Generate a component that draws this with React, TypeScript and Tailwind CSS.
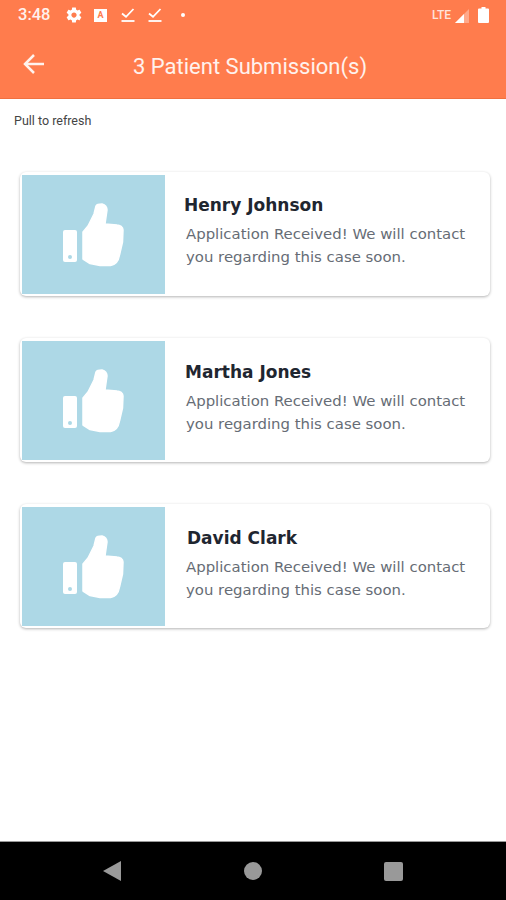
const submissions = [
    { name: 'Henry Johnson', nameClass: 'ml-[19px] mt-[19px]' },
    { name: 'Martha Jones', nameClass: 'ml-[20px] mt-[20px]' },
    { name: 'David Clark', nameClass: 'ml-[22px] mt-[20px]' },
];

function ThumbIcon() {
    return (
        <svg width="64" height="64" viewBox="0 0 64 64" fill="#fff">
            <path d="M1 29a2 2 0 0 1 2-2h10a2 2 0 0 1 2 2v28a2 2 0 0 1-2 2H3a2 2 0 0 1-2-2z" />
            <circle cx="8" cy="54" r="2" fill="#add8e6" />
            <path
                d="M21 56V29l5-6 6-12 2-8c1-2 4-2 6-2 3 1 5 3 5 6l-1 7-1 7 12 1c3 0 6 2 6 5l-.5 12-3 13c-1 6-4 10-9 10.500H38l-10-2z"
                stroke="#fff"
                strokeWidth="1.500"
                strokeLinejoin="round"
            />
        </svg>
    );
}

function GearIcon() {
    return (
        <svg width="18" height="18" viewBox="0 0 24 24" fill="#fff" className="mr-[11px]">
            <path d="M19.430 12.980c.040-.320.070-.640.070-.980s-.030-.660-.070-.980l2.110-1.650c.190-.150.240-.420.120-.640l-2-3.460c-.120-.220-.390-.300-.610-.220l-2.490 1c-.520-.400-1.080-.730-1.690-.980l-.380-2.650C14.460 2.180 14.250 2 14 2h-4c-.250 0-.460.180-.490.420l-.380 2.650c-.610.250-1.170.590-1.690.980l-2.490-1c-.230-.090-.490 0-.610.220l-2 3.460c-.130.220-.070.490.120.640l2.110 1.650c-.040.320-.070.650-.070.980s.030.660.070.980l-2.110 1.650c-.190.150-.240.420-.120.640l2 3.460c.120.220.390.300.610.220l2.490-1c.520.400 1.080.730 1.690.980l.380 2.650c.030.240.240.420.490.420h4c.250 0 .460-.180.490-.420l.380-2.650c.610-.250 1.170-.590 1.690-.980l2.490 1c.230.090.490 0 .610-.220l2-3.460c.120-.220.070-.490-.120-.640zM12 15.500c-1.930 0-3.500-1.570-3.500-3.500s1.570-3.500 3.500-3.500 3.500 1.570 3.500 3.500-1.570 3.500-3.500 3.500z" />
        </svg>
    );
}

function DoneIcon({ className }: { className: string }) {
    return (
        <svg width="14" height="15" viewBox="0 0 14 15" fill="none" stroke="#fff" strokeWidth="1.800" className={className}>
            <path d="M1 5.500l4 3.300L12.500 1" />
            <path d="M0.500 13h13" />
        </svg>
    );
}

function StatusBar() {
    return (
        <div className="h-[30px] flex items-center text-white pl-[18px]">
            <span className="text-[16.500px] font-medium w-[47px] font-['Roboto',sans-serif] opacity-90">3:48</span>
            <GearIcon />
            <div className="w-[13px] h-[13px] bg-white text-[#ff7c4d] text-[9px] leading-[13px] font-bold text-center mr-[14px] font-['Roboto',sans-serif]">A</div>
            <DoneIcon className="mr-[13px] mt-[1px]" />
            <DoneIcon className="mr-[19px] mt-[1px]" />
            <div className="w-[4px] h-[4px] rounded-full bg-white" />
            <span className="ml-auto text-[12px] font-medium opacity-80 font-['Roboto',sans-serif]">LTE</span>
            <svg width="16" height="16" viewBox="0 0 16 16" className="ml-[3px] mt-[1px]">
                <path d="M15 1v14H1z" fill="#fff" opacity="0.35" />
                <path d="M10 6v9H1z" fill="#fff" />
            </svg>
            <svg width="11" height="16" viewBox="0 0 11 16" fill="#fff" className="ml-[8px] mr-[17px]">
                <path d="M3.500 0h4v1.500H10a1 1 0 0 1 1 1V15a1 1 0 0 1-1 1H1a1 1 0 0 1-1-1V2.500a1 1 0 0 1 1-1h2.500z" />
            </svg>
        </div>
    );
}

function BackArrow() {
    return (
        <svg width="30" height="30" viewBox="0 0 30 30" fill="none" stroke="#fff" strokeWidth="2.500" className="opacity-90">
            <path d="M25 15H6" />
            <path d="M15 6l-9 9 9 9" />
        </svg>
    );
}

function SubmissionCard({ name, nameClass }: { name: string; nameClass: string }) {
    return (
        <li className="h-[124px] rounded-md bg-white shadow-[0_1px_3px_rgba(0,0,0,0.3)] pl-[2px] pt-[3px] flex">
            <div className="w-[143px] h-[119px] bg-[#add8e6] flex items-center justify-center shrink-0">
                <ThumbIcon />
            </div>
            <div className="flex-1">
                <h5 className={`text-[17px] leading-[22px] font-bold text-[#1f2630] font-['DejaVu_Sans',sans-serif] ${nameClass}`}>{name}</h5>
                <p className="ml-[21px] mr-[20px] mt-[7px] text-[14.900px] leading-[23px] text-[#666c75] font-['DejaVu_Sans',sans-serif]">
                    Application Received! We will contact you regarding this case soon.
                </p>
            </div>
        </li>
    );
}

export default function App() {
    return (
        <div className="h-[900px] flex flex-col bg-white">
            <header className="h-[99px] bg-[#ff7c4d] border-b border-[#f0703f]">
                <StatusBar />
                <div className="h-[68px] flex items-center pl-[19px]">
                    <BackArrow />
                    <h1 className="ml-[84px] mt-[4px] text-[22px] text-white/90 font-['Roboto',sans-serif]">3 Patient Submission(s)</h1>
                </div>
            </header>
            <main className="flex-1">
                <p className="ml-[14px] mt-[15px] text-[12.500px] leading-[14px] text-[#444] font-['Roboto',sans-serif]">Pull to refresh</p>
                <ul className="mt-[44px] ml-[20px] mr-[16px] flex flex-col gap-[42px]">
                    {submissions.map((submission) => (
                        <SubmissionCard key={submission.name} name={submission.name} nameClass={submission.nameClass} />
                    ))}
                </ul>
            </main>
            <nav className="h-[59px] bg-black border-t border-[#999] flex items-center">
                <svg width="20" height="22" viewBox="0 0 20 22" className="ml-[102px] mr-[122px]">
                    <path d="M19 1v20L1 11z" fill="#999" />
                </svg>
                <div className="w-[18px] h-[18px] rounded-full bg-[#999] mr-[122px]" />
                <div className="w-[19px] h-[19px] rounded-[2px] bg-[#999]" />
            </nav>
        </div>
    );
}
